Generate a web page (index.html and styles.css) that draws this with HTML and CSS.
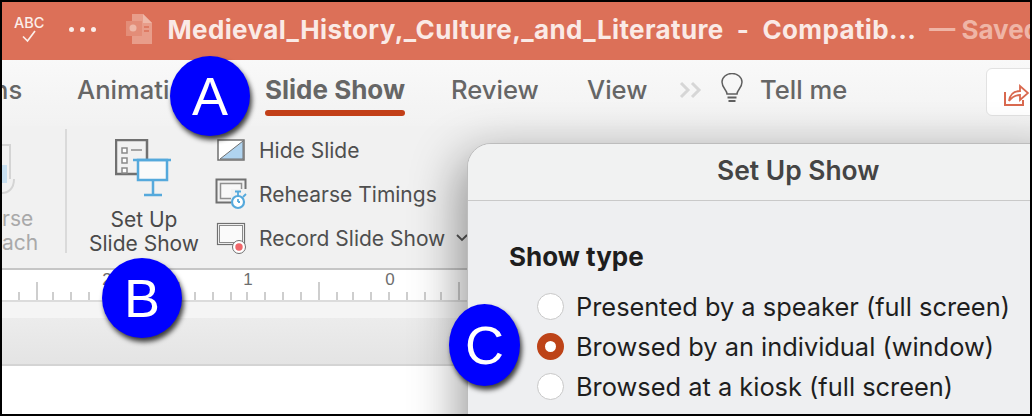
FILE: index.html
```html
<!DOCTYPE html>
<html lang="en">
<head>
    <meta charset="UTF-8">
    <title>Set Up Show</title>
    <link rel="stylesheet" href="styles.css">
</head>
<body>
    <div class="frame">
        <!-- Title bar -->
        <div class="titlebar">
            <div class="spell">
                <span>ABC</span>
                <svg width="16" height="13" viewBox="0 0 16 13"><path d="M2 6.500l4.500 4.500L14 1" fill="none" stroke="#fbeeea" stroke-width="1.700"/></svg>
            </div>
            <div class="more"><i></i><i></i><i></i></div>
            <svg class="doc" width="28" height="30" viewBox="0 0 28 30">
                <path d="M6 0h11l9 9v21H6z" fill="#eba997"/>
                <path d="M17 0v9h9z" fill="#f3cabd"/>
                <rect x="0" y="7" width="16" height="15" fill="#e59580"/>
                <circle cx="7" cy="14" r="3.500" fill="#f3cabd"/>
                <path d="M18 13h5M18 17h5" stroke="#dc7058" stroke-width="1.500"/>
            </svg>
            <span class="doc-name">Medieval_History,_Culture,_and_Literature&nbsp; - &nbsp;Compatib...</span>
            <span class="saved">— Saved</span>
        </div>

        <!-- Tabs -->
        <div class="tabs">
            <span class="tab tab-trans">ns</span>
            <span class="tab tab-anim">Animations</span>
            <span class="tab tab-active">Slide Show</span>
            <span class="tab tab-review">Review</span>
            <span class="tab tab-view">View</span>
            <svg class="chevrons" width="24" height="18" viewBox="0 0 24 18">
                <path d="M2 2l7 7-7 7M13 2l7 7-7 7" fill="none" stroke="#d6d6d6" stroke-width="3"/>
            </svg>
            <svg class="bulb" width="24" height="32" viewBox="0 0 24 32">
                <path d="M7 21c0-4-5-6-5-12a10 8.500 0 0 1 20 0c0 6-5 8-5 12z" fill="none" stroke="#5f5f5f" stroke-width="1.500"/>
                <path d="M7.500 24.500h9M8.500 28h7" stroke="#5f5f5f" stroke-width="1.800"/>
            </svg>
            <span class="tab tell-me">Tell me</span>
            <div class="share">
                <svg width="26" height="26" viewBox="0 0 26 26">
                    <path d="M2 11v13h18v-5" fill="none" stroke="#d9694f" stroke-width="2"/>
                    <path d="M6 20c1-7 5-10 11-10V5l8 7-8 7v-5c-5 0-8 2-11 6z" fill="none" stroke="#d9694f" stroke-width="1.800"/>
                </svg>
            </div>
        </div>

        <!-- Ribbon -->
        <div class="ribbon">
            <div class="rehearse-cut">
                <svg width="16" height="60" viewBox="0 0 16 60">
                    <path d="M0 2h8v34" fill="none" stroke="#d4d4d4" stroke-width="2"/>
                    <path d="M0 22h5v18H0z" fill="#c7dff0"/>
                    <path d="M0 50c6 0 12-4 12-14" fill="none" stroke="#d4d4d4" stroke-width="2"/>
                </svg>
                <span class="cut-rse">rse</span>
                <span class="cut-ach">ach</span>
            </div>
            <div class="sep"></div>
            <div class="big-btn">
                <svg width="58" height="60" viewBox="0 0 58 60">
                    <path d="M30 35H1V1h31v19" fill="none" stroke="#707070" stroke-width="2.500"/>
                    <path d="M7 9h5v5H7zM7 19h5v5H7zM7 29h5v5H7z" fill="#fff" stroke="#8a8a8a" stroke-width="1.500"/>
                    <path d="M16 11h11" stroke="#a5a5a5" stroke-width="2"/>
                    <rect x="23" y="21" width="29" height="20" fill="#fafafa" stroke="#55a9dc" stroke-width="2.500"/>
                    <path d="M18 21h38M38 41v15M29 56h18" stroke="#55a9dc" stroke-width="2.500"/>
                </svg>
                <span>Set Up<br>Slide Show</span>
            </div>
            <div class="small-btns">
                <div class="small-btn">
                    <svg width="32" height="26" viewBox="0 0 32 26">
                        <rect x="3" y="3" width="26" height="20" fill="#fff" stroke="#707070" stroke-width="1.500"/>
                        <path d="M5 22L28 4v18z" fill="#b0d4f0" stroke="#707070" stroke-width="1"/>
                    </svg>
                    <span>Hide Slide</span>
                </div>
                <div class="small-btn">
                    <svg width="32" height="32" viewBox="0 0 32 32">
                        <rect x="1.500" y="1.500" width="29" height="23" fill="none" stroke="#707070" stroke-width="2"/>
                        <rect x="5.500" y="5.500" width="21" height="15" fill="#f8f8f8" stroke="#909090" stroke-width="1.500"/>
                        <rect x="16" y="11" width="16" height="21" fill="#f2f2f2"/>
                        <circle cx="23" cy="24" r="6" fill="#fff" stroke="#55a9dc" stroke-width="2.200"/>
                        <path d="M20 13.500h6M23 14v4M23 24v-3M23 24h2M28 19l3-3" stroke="#55a9dc" stroke-width="1.800" fill="none"/>
                    </svg>
                    <span>Rehearse Timings</span>
                </div>
                <div class="small-btn">
                    <svg width="32" height="32" viewBox="0 0 32 32">
                        <rect x="2.500" y="1.500" width="27" height="21" fill="#fafafa" stroke="#707070" stroke-width="1.200"/>
                        <rect x="4.500" y="3.500" width="23" height="17" fill="#fafafa" stroke="#8a8a8a" stroke-width="1"/>
                        <circle cx="24" cy="25" r="6.500" fill="#fff" stroke="#707070" stroke-width="1"/>
                        <circle cx="24" cy="25" r="3.700" fill="#f0666a"/>
                    </svg>
                    <span>Record Slide Show</span>
                    <svg class="caret" width="12" height="8" viewBox="0 0 12 8"><path d="M1 1l5 5 5-5" fill="none" stroke="#555" stroke-width="1.800"/></svg>
                </div>
            </div>
        </div>

        <!-- Ruler -->
        <div class="ruler">
            <svg width="468" height="30" viewBox="0 0 468 30">
                <g font-family="'Liberation Sans', sans-serif" font-size="17" fill="#6e6e6e" text-anchor="middle">
                    <text x="105" y="15">2</text>
                    <text x="246" y="15">1</text>
                    <text x="388" y="15">0</text>
                </g>
                <g stroke="#b4b4b4" stroke-width="1.300">
                    <path d="M35 12v18M177 12v18M317 12v18M457 12v18"/>
                    <path d="M17 22v8M51 22v8M69 22v8M87 22v8M105 22v8M123 22v8M141 22v8M159 22v8M193 22v8M211 22v8M229 22v8M245 22v8M263 22v8M281 22v8M299 22v8M335 22v8M351 22v8M369 22v8M387 22v8M405 22v8M423 22v8M439 22v8"/>
                </g>
            </svg>
        </div>
        <div class="ruler-foot"></div>
        <div class="gutter"></div>
        <div class="slide-area"></div>

        <!-- Dialog -->
        <div class="dialog">
            <div class="dialog-title">Set Up Show</div>
            <div class="dialog-body">
                <h3>Show type</h3>
                <label class="radio-row"><span class="radio"></span>Presented by a speaker (full screen)</label>
                <label class="radio-row"><span class="radio checked"></span>Browsed by an individual (window)</label>
                <label class="radio-row"><span class="radio"></span>Browsed at a kiosk (full screen)</label>
            </div>
        </div>

        <!-- Callouts -->
        <div class="badge badge-a">A</div>
        <div class="badge badge-b">B</div>
        <div class="badge badge-c">C</div>
    </div>
</body>
</html>
```

FILE: styles.css
```css
* {
    box-sizing: border-box;
}

body {
    margin: 0;
    background: #000;
    font-family: Inter, "Noto Sans", sans-serif;
}

.frame {
    position: relative;
    width: 1028px;
    height: 412px;
    margin: 2px 0 0 2px;
    overflow: hidden;
    display: flex;
    flex-direction: column;
    background: #fff;
}

/* Title bar */
.titlebar {
    height: 58px;
    flex: none;
    display: flex;
    align-items: center;
    padding-bottom: 4px;
    background: #dc7058;
    white-space: nowrap;
    overflow: hidden;
}

.spell {
    width: 32px;
    margin-left: 12px;
    display: flex;
    flex-direction: column;
    align-items: center;
    color: #fbeeea;
    font-size: 14.500px;
    font-weight: 500;
    line-height: 15px;
}

.more {
    display: flex;
    gap: 6px;
    margin-left: 25px;
}

.more i {
    width: 5px;
    height: 5px;
    border-radius: 50%;
    background: #fbeeea;
}

.doc {
    flex: none;
    margin-left: 30px;
    opacity: 0.8;
}

.doc-name {
    margin-left: 13px;
    color: #faeae6;
    font-size: 26px;
    font-weight: 700;
    letter-spacing: 0.38px;
}

.saved {
    margin-left: 13px;
    color: #efb5a6;
    font-size: 26px;
    font-weight: 700;
}

/* Tabs */
.tabs {
    height: 66px;
    flex: none;
    position: relative;
    display: flex;
    align-items: center;
    padding-bottom: 8px;
    background: linear-gradient(#f9f9f9, #f2f2f2);
    white-space: nowrap;
}

.tab {
    flex: none;
    color: #666;
    font-size: 25.600px;
    font-weight: 500;
}

.tab-trans {
    width: 84px;
    margin-left: -9px;
}

.tab-anim {
    width: 188px;
}

.tab-active {
    width: 143px;
    font-size: 26px;
    font-weight: 700;
}

.tab-active::after {
    content: "";
    position: absolute;
    left: 263px;
    top: 50px;
    width: 140px;
    height: 6px;
    border-radius: 3px;
    background: #c23f18;
}

.tab-review {
    width: 136px;
    margin-left: 43px;
}

.tab-view {
    width: 92px;
}

.chevrons {
    flex: none;
    width: 41px;
    padding-right: 17px;
    margin-top: 1px;
}

.bulb {
    flex: none;
    width: 24px;
}

.tell-me {
    margin-left: 16px;
}

.share {
    position: absolute;
    left: 984px;
    top: 8px;
    width: 60px;
    height: 48px;
    padding: 12px 0 0 16px;
    background: #fff;
    border: 1px solid #e2e2e2;
    border-radius: 6px;
}

/* Ribbon */
.ribbon {
    height: 144px;
    flex: none;
    display: flex;
    background: #f1f1f1;
    border-bottom: 2px solid #c6c6c6;
}

.rehearse-cut {
    width: 63px;
    display: flex;
    flex-direction: column;
    color: #a9a9a9;
    font-size: 21px;
    line-height: 24px;
}

.rehearse-cut svg {
    margin-top: 17px;
    flex: none;
}

.cut-rse,
.cut-ach {
    display: block;
    text-align: right;
}

.cut-rse {
    width: 27px;
    margin-top: 4px;
}

.cut-ach {
    width: 35px;
}

.sep {
    width: 2px;
    height: 124px;
    margin-top: 3px;
    background: #dadada;
}

.big-btn {
    width: 148px;
    padding: 13px 0 0 6px;
    display: flex;
    flex-direction: column;
    align-items: center;
    color: #4a4a4a;
    font-size: 21px;
    line-height: 24px;
    text-align: center;
    white-space: nowrap;
}

.big-btn span {
    margin-top: 9px;
}

.small-btns {
    display: flex;
    flex-direction: column;
    padding-top: 8px;
    gap: 12px;
}

.small-btn {
    height: 32px;
    display: flex;
    align-items: center;
    gap: 12px;
    color: #4f4f4f;
    font-size: 21px;
    white-space: nowrap;
}

.caret {
    margin-left: -1px;
}

/* Ruler */
.ruler {
    height: 32px;
    flex: none;
    background: #fff;
    border-bottom: 2px solid #dcdcdc;
}

.ruler svg {
    display: block;
}

.ruler-foot {
    height: 16px;
    flex: none;
    background: #f5f5f5;
}

.gutter {
    height: 48px;
    flex: none;
    background: linear-gradient(#ececec, #e4e4e4);
    border-bottom: 2px solid #d4d4d4;
}

.slide-area {
    flex: 1;
    background: #fff;
}

/* Dialog */
.dialog {
    position: absolute;
    left: 465px;
    top: 141px;
    width: 600px;
    height: 320px;
    background: #eeeff1;
    border: 1px solid #bdbdbd;
    border-radius: 24px 0 0 0;
    box-shadow: -6px 14px 50px rgba(0, 0, 0, 0.42);
}

.dialog-title {
    height: 57px;
    padding: 10px 0 0 249px;
    background: #f1f2f2;
    border-bottom: 1px solid #c9c9c9;
    border-radius: 23px 0 0 0;
    color: #444;
    font-size: 26.400px;
    font-weight: 600;
    white-space: nowrap;
}

.dialog-body {
    padding: 42px 0 0 41px;
    color: #1e1e1e;
}

.dialog-body h3 {
    margin: 0 0 15px;
    font-size: 26px;
    line-height: 28px;
    font-weight: 700;
}

.radio-row {
    height: 40px;
    display: flex;
    align-items: center;
    gap: 12px;
    padding-left: 28px;
    font-size: 25.400px;
    white-space: nowrap;
}

.radio {
    flex: none;
    width: 27px;
    height: 27px;
    border-radius: 50%;
    background: #fff;
    border: 1px solid #c8c8c8;
}

.radio.checked {
    border: 8px solid #bd4318;
}

/* Callouts */
.badge {
    position: absolute;
    display: flex;
    align-items: center;
    justify-content: center;
    width: 80px;
    height: 80px;
    border-radius: 50%;
    background: #0000ff;
    color: #fff;
    font-family: "Liberation Sans", sans-serif;
    font-size: 54px;
    box-shadow: 2px 4px 5px rgba(0, 0, 0, 0.75);
}

.badge-a {
    left: 168px;
    top: 54px;
}

.badge-b {
    left: 100px;
    top: 256px;
}

.badge-c {
    left: 447px;
    top: 302px;
    width: 71px;
    height: 82px;
}
```
